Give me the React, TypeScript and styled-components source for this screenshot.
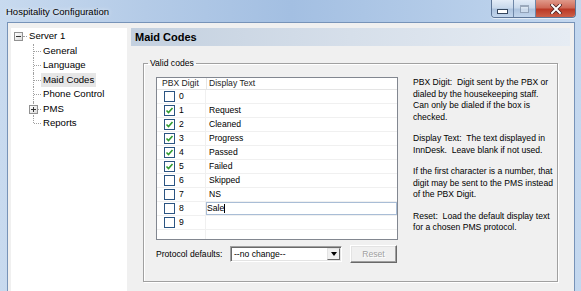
import React from 'react';
import styled, { createGlobalStyle, css } from 'styled-components';

const GlobalStyle = createGlobalStyle`
  html, body {
    margin: 0;
    padding: 0;
    background: #ffffff;
  }
  body {
    font-family: "Liberation Sans", Arial, sans-serif;
    color: #000;
  }
`;

const Window = styled.div`
  width: 581px;
  height: 291px;
  display: flex;
  flex-direction: column;
  overflow: hidden;
  background: linear-gradient(
    to right,
    #c8daef 0%,
    #b4cbe7 25%,
    #a3bfe2 50%,
    #b3cbe8 75%,
    #c4d8ef 100%
  );
`;

const TitleBar = styled.div`
  height: 22px;
  display: flex;
  align-items: flex-start;
  flex-shrink: 0;
`;

const TitleText = styled.div`
  padding: 5px 0 0 6px;
  font-size: 9.5px;
  line-height: 13px;
  color: #000;
  text-shadow: 0 0 4px rgba(255, 255, 255, 0.9);
`;

const CaptionGroup = styled.div`
  margin-left: auto;
  margin-right: 5px;
  display: flex;
  height: 17px;
  border: 1px solid #5d7597;
  border-top: none;
  border-radius: 0 0 4px 4px;
  overflow: hidden;
  box-shadow: 0 1px 0 rgba(255, 255, 255, 0.6);
`;

const CaptionButton = styled.div<{ $kind: 'min' | 'max' | 'close' }>`
  height: 100%;
  display: flex;
  align-items: center;
  justify-content: center;
  box-sizing: border-box;
  ${({ $kind }) =>
    $kind === 'close'
      ? css`
          width: 39px;
          background: linear-gradient(to bottom, #e0998a 0%, #cf6a58 45%, #bb3a27 55%, #cc6048 100%);
        `
      : css`
          width: 22px;
          border-right: 1px solid #6f87a8;
          background: linear-gradient(to bottom, #e3ecf7 0%, #c9d9ec 45%, #aec4df 55%, #c2d5ec 100%);
        `}
`;

const MinGlyph = styled.div`
  width: 9px;
  height: 3px;
  margin-top: 5px;
  background: #fff;
  border: 1px solid #35465e;
`;

const MaxGlyph = styled.div`
  width: 7px;
  height: 5px;
  border: 1px solid rgba(70, 90, 120, 0.45);
  border-top-width: 2px;
  background: rgba(255, 255, 255, 0.35);
`;

const ClientArea = styled.div`
  flex: 1;
  min-height: 0;
  margin: 0 6px 0 7px;
  border: 1px solid #7793b8;
  border-bottom: none;
  background: #f0f0f0;
  display: flex;
  padding: 5px 4px 0 3px;
`;

const Tree = styled.div`
  width: 116px;
  flex-shrink: 0;
  background: #fff;
  padding-top: 1px;
  font-size: 9.6px;
`;

const RootRow = styled.div`
  height: 14.5px;
  display: flex;
  align-items: center;
  padding-left: 3px;
`;

const ExpandBox = styled.div<{ $open?: boolean }>`
  position: relative;
  width: 9px;
  height: 9px;
  box-sizing: border-box;
  border: 1px solid #919191;
  background: linear-gradient(to bottom right, #ffffff, #dcdcdc);
  flex-shrink: 0;
  &::before {
    content: '';
    position: absolute;
    left: 1px;
    top: 3px;
    width: 5px;
    height: 1px;
    background: #333;
  }
  ${({ $open }) =>
    !$open &&
    css`
      &::after {
        content: '';
        position: absolute;
        left: 3px;
        top: 1px;
        width: 1px;
        height: 5px;
        background: #333;
      }
    `}
`;

const Stub = styled.div`
  width: 4px;
  border-top: 1px dotted #a0a0a0;
`;

const TreeLabel = styled.span<{ $selected?: boolean }>`
  padding: 0 2px;
  line-height: 14px;
  white-space: nowrap;
  ${({ $selected }) =>
    $selected &&
    css`
      background: #e6e6e6;
    `}
`;

const ChildRow = styled.div<{ $last?: boolean }>`
  position: relative;
  height: 14.5px;
  display: flex;
  align-items: center;
  padding-left: 30px;
  &::before {
    content: '';
    position: absolute;
    left: 22px;
    top: 0;
    height: ${({ $last }) => ($last ? '50%' : '100%')};
    border-left: 1px dotted #a0a0a0;
  }
  &::after {
    content: '';
    position: absolute;
    left: 23px;
    width: 7px;
    top: 50%;
    border-top: 1px dotted #a0a0a0;
  }
`;

const ChildExpand = styled(ExpandBox)`
  position: absolute;
  left: 18px;
  top: 3px;
  z-index: 1;
`;

const Content = styled.div`
  flex: 1;
  margin-left: 4px;
  display: flex;
  flex-direction: column;
  min-width: 0;
`;

const PageHeader = styled.div`
  height: 18px;
  line-height: 18px;
  padding-left: 4px;
  font-size: 11px;
  font-weight: bold;
  background: linear-gradient(to right, #c3d0df 0%, #d6dfea 50%, #e6ecf3 100%);
`;

const GroupBox = styled.fieldset`
  margin: 11px 12px 0 12px;
  padding: 8px 3px 18px 4px;
  border: 1px solid #a0a0a0;
  box-shadow: 1px 1px 0 #fff, inset 1px 1px 0 #fff;
  min-width: 0;
  font-size: 8.6px;
`;

const Legend = styled.legend`
  padding: 0 2px;
  line-height: 12px;
  font-size: 8.6px;
`;

const GroupRow = styled.div`
  display: flex;
  margin-left: 8px;
`;

const LeftColumn = styled.div`
  width: 242px;
  flex-shrink: 0;
  display: flex;
  flex-direction: column;
`;

const List = styled.div`
  height: 163px;
  box-sizing: border-box;
  border: 1px solid #828790;
  background: #fff
    linear-gradient(to right, transparent 48px, #f0f0f0 48px, #f0f0f0 49px, transparent 49px);
`;

const ListHeader = styled.div`
  height: 11px;
  display: grid;
  grid-template-columns: 49px 1fr;
  border-bottom: 1px solid #e5e5e5;
  line-height: 11px;
  background: #fff;
`;

const HeaderCell = styled.div<{ $first?: boolean }>`
  padding-left: ${({ $first }) => ($first ? '5px' : '3px')};
  white-space: nowrap;
  color: #1e1e1e;
  ${({ $first }) =>
    $first &&
    css`
      border-right: 1px solid #e5e5e5;
      margin-right: -1px;
    `}
`;

const Row = styled.div`
  height: 13px;
  display: grid;
  grid-template-columns: 49px 1fr;
  border-bottom: 1px solid #f0f0f0;
  line-height: 13px;
`;

const CheckCell = styled.div`
  display: flex;
  align-items: center;
  padding-left: 7px;
`;

const CheckBox = styled.div`
  width: 11px;
  height: 11px;
  box-sizing: border-box;
  border: 1px solid #2b5482;
  background: #fff;
  display: flex;
  align-items: center;
  justify-content: center;
  flex-shrink: 0;
`;

const Digit = styled.span`
  margin-left: 4px;
`;

const TextCell = styled.div<{ $editing?: boolean }>`
  padding-left: ${({ $editing }) => ($editing ? '0' : '3px')};
  white-space: nowrap;
`;

const EditBox = styled.div`
  height: 13px;
  box-sizing: border-box;
  border: 1px solid #a9bdd6;
  padding-left: 0;
  line-height: 11px;
  background: #fff;
  display: flex;
  align-items: center;
`;

const Caret = styled.span`
  display: inline-block;
  width: 1px;
  height: 9px;
  background: #000;
`;

const ProtocolRow = styled.div`
  margin-top: 5px;
  height: 18px;
  display: flex;
  align-items: center;
`;

const FieldLabel = styled.span`
  width: 74px;
  flex-shrink: 0;
  white-space: nowrap;
`;

const Combo = styled.div`
  width: 112px;
  height: 16px;
  box-sizing: border-box;
  border: 1px solid;
  border-color: #a0a0a0 #fff #fff #a0a0a0;
  box-shadow: inset 1px 1px 0 #696969, inset -1px -1px 0 #e3e3e3;
  background: #fff;
  display: flex;
  align-items: center;
  padding: 1px 1px 1px 3px;
`;

const ComboText = styled.span`
  flex: 1;
  white-space: nowrap;
`;

const ComboButton = styled.div`
  width: 13px;
  height: 12px;
  box-sizing: border-box;
  background: #f0f0f0;
  border: 1px solid;
  border-color: #e3e3e3 #696969 #696969 #e3e3e3;
  display: flex;
  align-items: center;
  justify-content: center;
`;

const Triangle = styled.div`
  width: 0;
  height: 0;
  border-left: 3.5px solid transparent;
  border-right: 3.5px solid transparent;
  border-top: 4px solid #000;
`;

const Button = styled.button`
  margin-left: 8px;
  width: 47px;
  height: 18px;
  box-sizing: border-box;
  padding: 0;
  font-family: inherit;
  font-size: 8.6px;
  color: #a0a0a0;
  text-shadow: 1px 1px 0 #fff;
  background: #f0f0f0;
  border: 1px solid;
  border-color: #fff #696969 #696969 #fff;
  box-shadow: inset -1px -1px 0 #a0a0a0, inset 1px 1px 0 #e3e3e3;
`;

const HelpText = styled.div`
  margin-left: 15px;
  margin-top: 0;
  line-height: 11.5px;
  white-space: nowrap;
  align-self: flex-start;
`;

const HelpPara = styled.p`
  margin: 0 0 10px 0;
`;

const CheckMark = () => (
  <svg width="9" height="9" viewBox="0 0 9 9">
    <path d="M1.5 4.5 L3.5 6.5 L7.5 2" fill="none" stroke="#2f9a2f" strokeWidth="1.6" />
  </svg>
);

const CloseGlyph = () => (
  <svg width="12" height="10" viewBox="0 0 12 10">
    <path d="M2 1 L10 9 M10 1 L2 9" stroke="#4a2020" strokeWidth="3.6" strokeLinecap="square" />
    <path d="M2 1 L10 9 M10 1 L2 9" stroke="#ffffff" strokeWidth="2" strokeLinecap="square" />
  </svg>
);

const codes = [
  { digit: '0', text: '', checked: false },
  { digit: '1', text: 'Request', checked: true },
  { digit: '2', text: 'Cleaned', checked: true },
  { digit: '3', text: 'Progress', checked: true },
  { digit: '4', text: 'Passed', checked: true },
  { digit: '5', text: 'Failed', checked: true },
  { digit: '6', text: 'Skipped', checked: false },
  { digit: '7', text: 'NS', checked: false },
  { digit: '8', text: 'Sale', checked: false, editing: true },
  { digit: '9', text: '', checked: false },
];

const treeItems = ['General', 'Language', 'Maid Codes', 'Phone Control', 'PMS', 'Reports'];

const App: React.FC = () => {
  return (
    <>
      <GlobalStyle />
      <Window>
        <TitleBar>
          <TitleText>Hospitality Configuration</TitleText>
          <CaptionGroup>
            <CaptionButton $kind="min">
              <MinGlyph />
            </CaptionButton>
            <CaptionButton $kind="max">
              <MaxGlyph />
            </CaptionButton>
            <CaptionButton $kind="close">
              <CloseGlyph />
            </CaptionButton>
          </CaptionGroup>
        </TitleBar>

        <ClientArea>
          <Tree>
            <RootRow>
              <ExpandBox $open />
              <Stub />
              <TreeLabel>Server 1</TreeLabel>
            </RootRow>
            {treeItems.map((item, i) => (
              <ChildRow key={item} $last={i === treeItems.length - 1}>
                {item === 'PMS' && <ChildExpand />}
                <TreeLabel $selected={item === 'Maid Codes'}>{item}</TreeLabel>
              </ChildRow>
            ))}
          </Tree>

          <Content>
            <PageHeader>Maid Codes</PageHeader>
            <GroupBox>
              <Legend>Valid codes</Legend>
              <GroupRow>
                <LeftColumn>
                  <List>
                    <ListHeader>
                      <HeaderCell $first>PBX Digit</HeaderCell>
                      <HeaderCell>Display Text</HeaderCell>
                    </ListHeader>
                    {codes.map((c) => (
                      <Row key={c.digit}>
                        <CheckCell>
                          <CheckBox>{c.checked && <CheckMark />}</CheckBox>
                          <Digit>{c.digit}</Digit>
                        </CheckCell>
                        <TextCell $editing={c.editing}>
                          {c.editing ? (
                            <EditBox>
                              {c.text}
                              <Caret />
                            </EditBox>
                          ) : (
                            c.text
                          )}
                        </TextCell>
                      </Row>
                    ))}
                  </List>
                  <ProtocolRow>
                    <FieldLabel>Protocol defaults:</FieldLabel>
                    <Combo>
                      <ComboText>--no change--</ComboText>
                      <ComboButton>
                        <Triangle />
                      </ComboButton>
                    </Combo>
                    <Button disabled>Reset</Button>
                  </ProtocolRow>
                </LeftColumn>
                <HelpText>
                  <HelpPara>
                    PBX Digit:&nbsp; Digit sent by the PBX or
                    <br />
                    dialed by the housekeeping staff.
                    <br />
                    Can only be dialed if the box is
                    <br />
                    checked.
                  </HelpPara>
                  <HelpPara>
                    Display Text:&nbsp; The text displayed in
                    <br />
                    InnDesk.&nbsp; Leave blank if not used.
                  </HelpPara>
                  <HelpPara>
                    If the first character is a number, that
                    <br />
                    digit may be sent to the PMS instead
                    <br />
                    of the PBX Digit.
                  </HelpPara>
                  <HelpPara>
                    Reset:&nbsp; Load the default display text
                    <br />
                    for a chosen PMS protocol.
                  </HelpPara>
                </HelpText>
              </GroupRow>
            </GroupBox>
          </Content>
        </ClientArea>
      </Window>
    </>
  );
};

export default App;
